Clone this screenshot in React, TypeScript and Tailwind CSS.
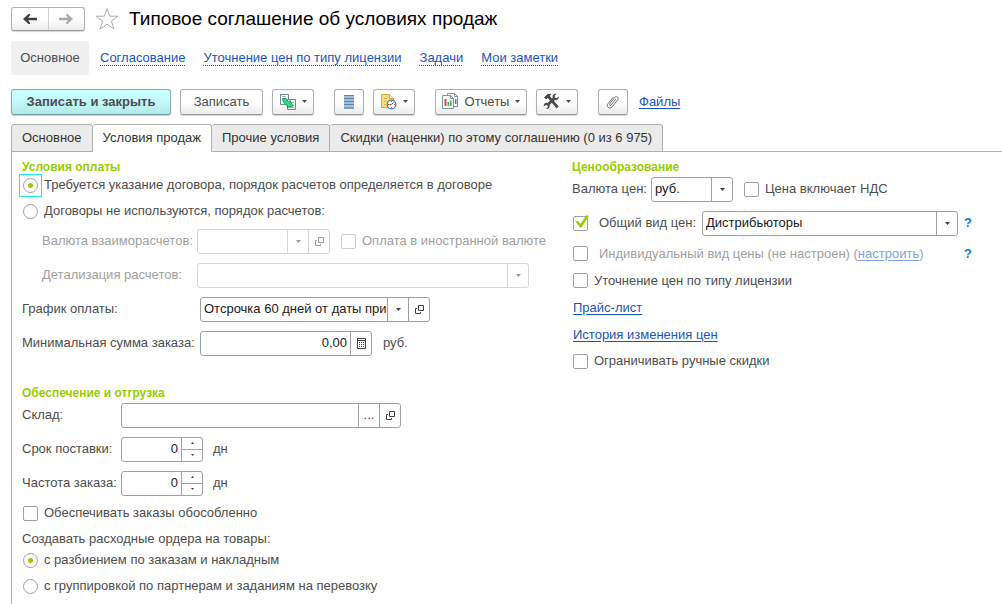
import { useId, useState } from "react";
import type { ReactNode } from "react";

function Caret({ size = "h-[3px] w-[5px]" }: { size?: string }) {
  return (
    <svg viewBox="0 0 5 3" className={`shrink-0 ${size}`} aria-hidden="true">
      <path d="M0 0h5L2.5 3z" fill="currentColor" />
    </svg>
  );
}

function ArrowIcon({ flip = false }: { flip?: boolean }) {
  return (
    <svg viewBox="0 0 14 10" className={`h-[10px] w-[14px] ${flip ? "rotate-180" : ""}`} aria-hidden="true">
      <path d="M0 5 5.500 0H7v1L5.200 3.700H14v2.600H5.200L7 9v1H5.500z" fill="currentColor" />
    </svg>
  );
}

function StarIcon() {
  return (
    <svg viewBox="0 0 24 24" className="size-6" fill="none" stroke="#a9b0b6" aria-hidden="true">
      <path d="M12 1.500 14.700 9.200H23L16.400 14l2.500 8L12 17.200 5.100 22l2.500-8L1 9.200h8.300z" />
    </svg>
  );
}

function CreateFromIcon() {
  return (
    <svg viewBox="0 0 18 18" className="size-[18px]" aria-hidden="true">
      <path d="M1.500 1.500h8v10h-8z" fill="#fff" stroke="#71889b" />
      <path d="M3 3.500h4" stroke="#9fb2c0" />
      <path d="M8.500 6.500h8v10h-8z" fill="#fff" stroke="#71889b" />
      <path d="M12 9.500h3M13 12.500h2M10 14.500h5" stroke="#9fb2c0" />
      <path d="M3.500 5.500h3.500l2.500 3.500 1.500-1.500 3 5.500-6 1.500 1-2q-4.500-.500-5.500-7z" fill="#2fe081" stroke="#159a4e" strokeWidth=".9" strokeLinejoin="round" />
    </svg>
  );
}

function ListIcon() {
  return (
    <svg viewBox="0 0 10 14" className="h-[14px] w-[10px]" aria-hidden="true">
      <path d="M0 0h10v14H0z" fill="#a3c0d6" />
      <path d="M0 .500h10M0 3.500h10M0 6.500h10M0 9.500h10M0 13h10" stroke="#5d82a0" />
    </svg>
  );
}

function ScheduleIcon() {
  return (
    <svg viewBox="0 0 17 17" className="size-[17px]" aria-hidden="true">
      <path d="M1.500 1.500h8l4 4v9h-12z" fill="#f8dd85" stroke="#cfa845" />
      <path d="M9.500 1.500v4h4" fill="#fff3c4" stroke="#cfa845" />
      <path d="M4 5.500h3M4 8.500h3M4 11.500h2" stroke="#dbb755" />
      <circle cx="11.500" cy="11.500" r="4.300" fill="#fff" stroke="#4d7fae" strokeWidth="1.300" />
      <path d="M11.500 11.500 13.500 9.500M11.500 11.500h-2" stroke="#345f8a" />
      <path d="M11.500 8v1M11.500 14v1M14 11.500h1M8 11.500h1" stroke="#e0463a" />
    </svg>
  );
}

function ReportsIcon() {
  return (
    <svg viewBox="0 0 17 17" className="size-[17px]" aria-hidden="true">
      <path d="M5.500.500h7l3 3v10h-10z" fill="#fff" stroke="#7b95a3" />
      <path d="M12.500.500v3h3" fill="none" stroke="#7b95a3" />
      <path d="M13 6h1.500v5H13z" fill="#3da34a" />
      <path d="M.500 2.500h8l3 3v10H.500z" fill="#fff" stroke="#7b95a3" />
      <path d="M8.500 2.500v3h3" fill="none" stroke="#7b95a3" />
      <path d="M2.500 6h2v7h-2z" fill="#e8432e" />
      <path d="M5.500 9h1.500v4H5.500zM8 7.500h1.500V13H8z" fill="#3da34a" />
    </svg>
  );
}

function ToolsIcon() {
  return (
    <svg viewBox="0 0 17 17" className="size-[17px]" aria-hidden="true">
      <path d="M1 4.500 4.500 1h4L6.800 3l8.900 10.500-2 2L4.700 5 3 6.500z" fill="#4a4a4a" />
      <path d="M15.800 3.200 13.700 5.200 12 4.600l-.400-1.700L13.500.800c-2.600-.500-4.600 1.600-3.800 4L4.600 10c-2.400-.700-4.300 1.100-3.800 3.500l2-1.600 1.700.500.400 1.700L3 16c2.400.400 4.200-1.500 3.500-3.900L11.800 7c2.500.700 4.500-1.200 4-3.800z" fill="#4a4a4a" />
    </svg>
  );
}

function ClipIcon() {
  return (
    <svg viewBox="0 0 16 16" className="size-4" fill="none" stroke="#707070" strokeLinecap="round" aria-hidden="true">
      <path d="M10.500 5.500 6.300 10.800c-1 1.200-2.400.100-1.500-1.100l5-6.300c1.700-2 4.600.100 3 2.300l-5.600 7.100c-2.500 3-6.500-.100-4.200-3.100L8 3.500" />
    </svg>
  );
}

function OpenIcon() {
  return (
    <svg viewBox="0 0 9 9" className="size-[9px]" fill="none" stroke="currentColor" aria-hidden="true">
      <path d="M3.500.500h5v5h-5zM2 3.500H.500v5h5V7" />
    </svg>
  );
}

function CalculatorIcon() {
  return (
    <svg viewBox="0 0 9 11" className="h-[11px] w-[9px]" fill="none" stroke="currentColor" aria-hidden="true">
      <path d="M.500.500h8v10h-8zM1 2.500h7" />
      <path d="M2 4.500h5M2 6.500h5M2 8.500h5" strokeDasharray="1 1" />
    </svg>
  );
}

function ToolButton({ children, label, className }: { children: ReactNode; label?: string; className: string }) {
  return (
    <button
      type="button"
      aria-label={label}
      className={`flex h-[26px] items-center justify-center rounded-[3px] border border-[#b0b0b0] border-b-[#989898] bg-linear-to-b from-white from-50% to-[#ececec] shadow-[0_1px_1px_#d4d4d4] ${className}`}
    >
      {children}
    </button>
  );
}

const fieldBox = "flex h-[25px] overflow-hidden rounded-[3px] border bg-white";
const enabledBox = "border-[#a0a0a0] text-[#404040]";
const disabledBox = "border-[#d6d6d6] text-[#999]";

function FieldButton({ label, disabled, children }: { label: string; disabled?: boolean; children: ReactNode }) {
  return (
    <button type="button" aria-label={label} disabled={disabled} className="flex w-[21px] shrink-0 items-center justify-center border-l border-inherit">
      {children}
    </button>
  );
}

function Combo({ id, options, disabled, open, label, className }: { id: string; options: string[]; disabled?: boolean; open?: boolean; label?: string; className: string }) {
  return (
    <div className={`${fieldBox} ${disabled ? disabledBox : enabledBox} ${className}`}>
      <div className="grid min-w-0 flex-1 grid-cols-[minmax(0,1fr)_21px] border-inherit">
        <select id={id} aria-label={label} disabled={disabled} className="col-span-2 col-start-1 row-start-1 appearance-none bg-transparent pr-[22px] pl-[3px] text-[#1a1a1a] opacity-100 outline-none">
          {options.map((o) => (
            <option key={o}>{o}</option>
          ))}
        </select>
        <span className="pointer-events-none col-start-2 row-start-1 flex items-center justify-center border-l border-inherit">
          <Caret />
        </span>
      </div>
      {open && (
        <FieldButton label="Открыть" disabled={disabled}>
          <OpenIcon />
        </FieldButton>
      )}
    </div>
  );
}

function DaysField({ id, label }: { id: string; label: string }) {
  const [value, setValue] = useState(0);
  return (
    <div className="flex h-[34px] items-center">
      <label htmlFor={id} className="w-[99px] shrink-0">
        {label}
      </label>
      <div className={`${fieldBox} ${enabledBox} w-[82px]`}>
        <input id={id} value={value} inputMode="numeric" onChange={(e) => setValue(Number(e.target.value) || 0)} className="min-w-0 flex-1 pr-[3px] text-right text-[#1a1a1a] outline-none" />
        <span className="flex w-[21px] flex-col border-l border-inherit">
          <button type="button" aria-label="Больше" onClick={() => setValue(value + 1)} className="flex flex-1 items-center justify-center border-b border-inherit">
            <Caret size="h-[2px] w-[3px] rotate-180" />
          </button>
          <button type="button" aria-label="Меньше" onClick={() => setValue(Math.max(0, value - 1))} className="flex flex-1 items-center justify-center">
            <Caret size="h-[2px] w-[3px]" />
          </button>
        </span>
      </div>
      <span className="ml-[10px]">дн</span>
    </div>
  );
}

function Radio({ name, label, checked, onChange, ring }: { name: string; label: string; checked: boolean; onChange: () => void; ring?: boolean }) {
  const id = useId();
  return (
    <div className="flex h-[26px] items-center">
      <span className={`-ml-[3px] flex size-[23px] items-center justify-center border ${ring ? "border-[#22e6f2]" : "border-transparent"}`}>
        <input
          id={id}
          type="radio"
          name={name}
          checked={checked}
          onChange={onChange}
          className="grid size-[15px] appearance-none place-items-center rounded-full border border-[#a0a0a0] bg-white outline-none before:size-[5px] before:rounded-full checked:before:bg-[#99cc00]"
        />
      </span>
      <label htmlFor={id} className="ml-[2px]">
        {label}
      </label>
    </div>
  );
}

function CheckInput({ id, defaultChecked, disabled, pale }: { id: string; defaultChecked?: boolean; disabled?: boolean; pale?: boolean }) {
  return (
    <span className="grid size-[15px] shrink-0">
      <input
        id={id}
        type="checkbox"
        defaultChecked={defaultChecked}
        disabled={disabled}
        className={`peer col-start-1 row-start-1 size-[15px] appearance-none rounded-[2px] border bg-white ${pale ? "border-[#d0d0d0]" : "border-[#a0a0a0]"}`}
      />
      <svg viewBox="0 0 15 15" className="pointer-events-none invisible col-start-1 row-start-1 size-[15px] overflow-visible peer-checked:visible" aria-hidden="true">
        <path d="M2.500 5.500 5 5l2.500 3L13 -.500h3L8.500 11.500H7z" fill="#99cc00" />
      </svg>
    </span>
  );
}

function Check({ label, disabled, pale, className = "" }: { label: string; disabled?: boolean; pale?: boolean; className?: string }) {
  const id = useId();
  return (
    <div className={`flex items-center gap-[6px] ${className}`}>
      <CheckInput id={id} disabled={disabled} pale={pale} />
      <label htmlFor={id} className={disabled ? "text-[#a0a0a0]" : ""}>
        {label}
      </label>
    </div>
  );
}

function Heading({ children }: { children: ReactNode }) {
  return <h2 className="h-3 text-[12px] leading-[14px] font-bold text-[#99cc00]">{children}</h2>;
}

const link = "text-[#1a55b8] underline underline-offset-2";
const tabs = ["Основное", "Условия продаж", "Прочие условия", "Скидки (наценки) по этому соглашению (0 из 6 975)"];
const sections = ["Согласование", "Уточнение цен по типу лицензии", "Задачи", "Мои заметки"];

export default function App() {
  const [contract, setContract] = useState(0);
  const [orders, setOrders] = useState(0);
  const [tab, setTab] = useState(1);

  return (
    <div className="flex min-h-screen flex-col bg-white pt-[6px] pl-[11px] font-['Liberation_Sans',Arial,sans-serif] text-[13px] leading-[16px] whitespace-nowrap text-[#4d4d4d]">
      <header className="flex h-[25px] items-center">
        <div className="flex h-6 w-[74px] rounded-[3px] border border-[#b0b0b0] border-b-[#989898] bg-linear-to-b from-white from-50% to-[#ececec] shadow-[0_1px_1px_#d4d4d4]">
          <button type="button" aria-label="Назад" className="flex flex-1 items-center justify-center text-[#404040]">
            <ArrowIcon />
          </button>
          <button type="button" aria-label="Вперед" className="flex flex-1 items-center justify-center border-l border-[#d0d0d0] text-[#a8a8a8]">
            <ArrowIcon flip />
          </button>
        </div>
        <button type="button" aria-label="Добавить в избранное" className="ml-[10px]">
          <StarIcon />
        </button>
        <h1 className="ml-[10px] text-[19px] leading-6 text-black">Типовое соглашение об условиях продаж</h1>
      </header>

      <nav className="mt-[10px] flex h-[34px] items-center">
        <a href="#main" className="mr-[11px] flex h-[34px] w-[78px] items-center justify-center rounded-[3px] bg-[#f0f0f0]">
          Основное
        </a>
        <div className="flex gap-[18px]">
          {sections.map((s) => (
            <a key={s} href="#section" className="text-[#1a55b8] underline decoration-dotted decoration-1 underline-offset-[3px]">
              {s}
            </a>
          ))}
        </div>
      </nav>

      <div className="mt-[13px] flex h-[27px] items-center" role="toolbar">
        <button type="button" className="h-[26px] w-40 rounded-[3px] border border-[#86adad] border-b-[#6f9c9c] bg-linear-to-b from-[#c8ffff] from-30% to-[#b4e9e9] font-bold shadow-[0_1px_1px_#c4d4d4]">
          Записать и закрыть
        </button>
        <div className="ml-[9px] flex gap-[9px]">
          <ToolButton className="w-[83px]">Записать</ToolButton>
          <ToolButton label="Создать на основании" className="w-[42px] gap-[5px]">
            <CreateFromIcon />
            <Caret />
          </ToolButton>
        </div>
        <div className="ml-5 flex gap-[9px]">
          <ToolButton label="Список" className="w-[30px]">
            <ListIcon />
          </ToolButton>
          <ToolButton label="Расписание" className="w-[42px] gap-[6px]">
            <ScheduleIcon />
            <Caret />
          </ToolButton>
        </div>
        <div className="ml-5 flex gap-[9px]">
          <ToolButton className="w-[92px] gap-[6px]">
            <ReportsIcon />
            <span>Отчеты</span>
            <Caret />
          </ToolButton>
          <ToolButton label="Сервис" className="w-[42px] gap-[6px]">
            <ToolsIcon />
            <Caret />
          </ToolButton>
        </div>
        <div className="ml-5 flex items-center gap-[11px]">
          <ToolButton label="Прикрепить файл" className="w-[30px]">
            <ClipIcon />
          </ToolButton>
          <a href="#files" className={link}>
            Файлы
          </a>
        </div>
      </div>

      <div role="tablist" className="mt-[9px] flex h-7 border-b border-[#b0b0b0]">
        {tabs.map((t, i) => (
          <button
            key={t}
            type="button"
            role="tab"
            aria-selected={tab === i}
            onClick={() => setTab(i)}
            className={`h-7 rounded-t-[3px] border-t border-r border-b border-[#b0b0b0] px-[10px] text-[#333] first:border-l ${tab === i ? "border-b-white bg-white" : "bg-[#ebebeb]"}`}
          >
            {t}
          </button>
        ))}
      </div>

      <main className="grid flex-1 grid-cols-[550px_minmax(0,1fr)] border-l border-[#b0b0b0] pt-2 pl-[10px]">
        <div>
          <Heading>Условия оплаты</Heading>
          <Radio ring name="contract" label="Требуется указание договора, порядок расчетов определяется в договоре" checked={contract === 0} onChange={() => setContract(0)} />
          <Radio name="contract" label="Договоры не используются, порядок расчетов:" checked={contract === 1} onChange={() => setContract(1)} />
          <div className="grid grid-cols-[155px_minmax(0,1fr)] pl-5 text-[#a0a0a0]">
            <label htmlFor="settle" className="flex h-[34px] items-center">
              Валюта взаиморасчетов:
            </label>
            <div className="flex items-center gap-[11px]">
              <Combo id="settle" options={[""]} disabled open className="w-[133px]" />
              <Check label="Оплата в иностранной валюте" disabled pale />
            </div>
            <label htmlFor="detail" className="flex h-[34px] items-center">
              Детализация расчетов:
            </label>
            <div className="flex items-center">
              <Combo id="detail" options={[""]} disabled className="w-[332px]" />
            </div>
          </div>
          <div className="grid grid-cols-[178px_minmax(0,1fr)]">
            <label htmlFor="schedule" className="flex h-[34px] items-center">
              График оплаты:
            </label>
            <div className="flex items-center">
              <Combo id="schedule" options={["Отсрочка 60 дней от даты приемки"]} open className="w-[230px]" />
            </div>
            <label htmlFor="minsum" className="flex h-[34px] items-center">
              Минимальная сумма заказа:
            </label>
            <div className="flex items-center gap-[11px]">
              <div className={`${fieldBox} ${enabledBox} w-[172px]`}>
                <input id="minsum" defaultValue="0,00" className="min-w-0 flex-1 pr-[3px] text-right text-[#1a1a1a] outline-none" />
                <FieldButton label="Калькулятор">
                  <CalculatorIcon />
                </FieldButton>
              </div>
              <span>руб.</span>
            </div>
          </div>

          <div className="mt-[26px]">
            <Heading>Обеспечение и отгрузка</Heading>
            <div className="flex h-[34px] items-center">
              <label htmlFor="stock" className="w-[99px] shrink-0">
                Склад:
              </label>
              <div className={`${fieldBox} ${enabledBox} w-[280px]`}>
                <input id="stock" className="min-w-0 flex-1 px-[3px] text-[#1a1a1a] outline-none" />
                <FieldButton label="Выбрать">...</FieldButton>
                <FieldButton label="Открыть">
                  <OpenIcon />
                </FieldButton>
              </div>
            </div>
            <DaysField id="delivery" label="Срок поставки:" />
            <DaysField id="frequency" label="Частота заказа:" />
            <Check label="Обеспечивать заказы обособленно" className="h-[26px] pl-px" />
            <fieldset>
              <legend className="pt-[5px]">Создавать расходные ордера на товары:</legend>
              <Radio name="orders" label="с разбиением по заказам и накладным" checked={orders === 0} onChange={() => setOrders(0)} />
              <Radio name="orders" label="с группировкой по партнерам и заданиям на перевозку" checked={orders === 1} onChange={() => setOrders(1)} />
            </fieldset>
          </div>
        </div>

        <div>
          <Heading>Ценообразование</Heading>
          <div className="flex h-[34px] items-center">
            <label htmlFor="currency" className="w-[79px]">
              Валюта цен:
            </label>
            <Combo id="currency" options={["руб."]} className="w-[82px]" />
            <Check label="Цена включает НДС" className="ml-[11px]" />
          </div>
          <div className="flex h-[34px] items-center pl-px">
            <CheckInput id="common" defaultChecked />
            <label htmlFor="common" className="ml-[11px] w-[103px]">
              Общий вид цен:
            </label>
            <Combo id="kind" label="Вид цен" options={["Дистрибьюторы"]} className="w-[256px]" />
            <button type="button" className="ml-[6px] font-bold text-[#1879bd]">
              ?
            </button>
          </div>
          <div className="flex h-[27px] items-center pl-px text-[#a0a0a0]">
            <CheckInput id="individual" />
            <span className="ml-[11px] w-[359px]">
              <label htmlFor="individual">Индивидуальный вид цены (не настроен) </label>(
              <a href="#setup" className="text-[#7fa3dc] underline underline-offset-2">
                настроить
              </a>
              )
            </span>
            <button type="button" className="ml-[6px] font-bold text-[#1879bd]">
              ?
            </button>
          </div>
          <Check label="Уточнение цен по типу лицензии" className="h-[27px] pl-px" />
          <div className="flex h-[27px] items-center pl-px">
            <a href="#price-list" className={link}>
              Прайс-лист
            </a>
          </div>
          <div className="flex h-[27px] items-center pl-px">
            <a href="#history" className={link}>
              История изменения цен
            </a>
          </div>
          <Check label="Ограничивать ручные скидки" className="h-[26px] pl-px" />
        </div>
      </main>
    </div>
  );
}
